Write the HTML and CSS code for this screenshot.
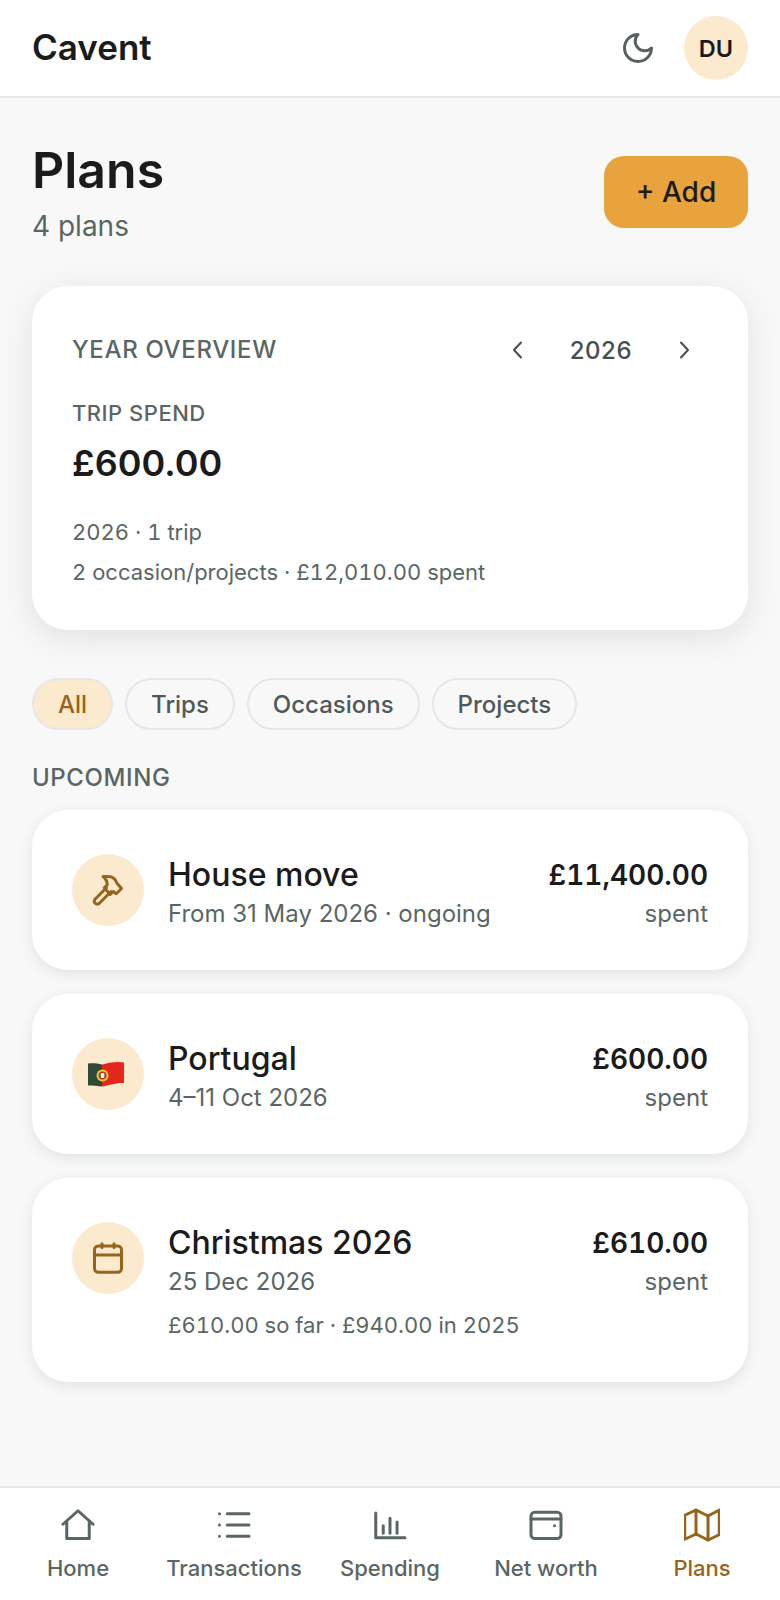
FILE: index.html
```html
<!DOCTYPE html>
<html lang="en">
<head>
  <meta charset="utf-8">
  <title>Cavent - Plans</title>
  <link rel="stylesheet" href="styles.css">
</head>
<body>
  <div class="app">
    <header class="topbar">
      <span class="brand">Cavent</span>
      <div class="topbar-right">
        <svg class="moon" viewBox="0 0 24 24"><path d="M12 3a6 6 0 0 0 9 9 9 9 0 1 1-9-9Z"/></svg>
        <div class="avatar">DU</div>
      </div>
    </header>

    <main class="content">
      <div class="page-head">
        <div>
          <h1 class="page-title">Plans</h1>
          <p class="page-count">4 plans</p>
        </div>
        <button class="add-btn">+ Add</button>
      </div>

      <section class="overview">
        <div class="overview-top">
          <span class="overview-label">YEAR OVERVIEW</span>
          <div class="year-nav">
            <svg class="chev" viewBox="0 0 24 24"><path d="M15 4.500 8 12l7 7.500"/></svg>
            <span class="year">2026</span>
            <svg class="chev" viewBox="0 0 24 24"><path d="M9 4.500l7 7.500-7 7.500"/></svg>
          </div>
        </div>
        <div class="spend-label">TRIP SPEND</div>
        <div class="spend-value">£600.00</div>
        <p class="overview-note first">2026 · 1 trip</p>
        <p class="overview-note">2 occasion/projects · £12,010.00 spent</p>
      </section>

      <div class="chips">
        <span class="chip active">All</span>
        <span class="chip">Trips</span>
        <span class="chip">Occasions</span>
        <span class="chip">Projects</span>
      </div>

      <h2 class="section-label">UPCOMING</h2>

      <div class="plan">
        <div class="plan-icon">
          <svg class="icon-brown" viewBox="0 0 24 24"><path d="M11 10.500 3.300 18.200a2 2 0 0 0 2.800 2.800L14 13"/><path d="M8.700 3H12c3 0 5 1.500 6 4.500l3 3.500-3.500 3.500-2-1.500-2 2-4-4.500 2-2c0-2-1-4-2.800-5.500Z"/></svg>
        </div>
        <div class="plan-main">
          <div class="plan-name">House move</div>
          <div class="plan-date">From 31 May 2026 · ongoing</div>
        </div>
        <div class="plan-side">
          <div class="plan-amount">£11,400.00</div>
          <div class="plan-spent">spent</div>
        </div>
      </div>

      <div class="plan">
        <div class="plan-icon">
          <svg class="flag" viewBox="0 0 36 26">
            <path fill="#2e4a36" d="M0 2.500C5 2 10 2.500 14 3.500v22c-4-.5-9-1-14-1Z"/>
            <path fill="#e4261c" d="M14 3.500C20 2 28 0 36 1.500V22c-8-.5-16 2.500-22 3.500Z"/>
            <circle cx="14.500" cy="14.500" r="6" fill="#e9cf2b"/>
            <circle cx="14.500" cy="14.500" r="4" fill="#b33a2b"/>
            <rect x="12.700" y="12" width="3.600" height="5" rx="1" fill="#eef0f2"/>
          </svg>
        </div>
        <div class="plan-main">
          <div class="plan-name">Portugal</div>
          <div class="plan-date">4–11 Oct 2026</div>
        </div>
        <div class="plan-side">
          <div class="plan-amount">£600.00</div>
          <div class="plan-spent">spent</div>
        </div>
      </div>

      <div class="plan tall">
        <div class="plan-icon">
          <svg class="icon-brown" viewBox="0 0 24 24"><rect x="3" y="4" width="18" height="17.500" rx="2.500"/><path d="M3 10h18M8 2.500V5M16 2.500V5"/></svg>
        </div>
        <div class="plan-main">
          <div class="plan-name">Christmas 2026</div>
          <div class="plan-date">25 Dec 2026</div>
          <div class="plan-extra">£610.00 so far · £940.00 in 2025</div>
        </div>
        <div class="plan-side">
          <div class="plan-amount">£610.00</div>
          <div class="plan-spent">spent</div>
        </div>
      </div>
    </main>

    <nav class="tabbar">
      <div class="tab">
        <svg viewBox="0 0 24 24"><path d="M2 11.500 12 2.500l10 9"/><path d="M4.500 9.500V21h15V9.500"/></svg>
        <span>Home</span>
      </div>
      <div class="tab">
        <svg viewBox="0 0 24 24"><path d="M7.500 4.500H22M7.500 12H22M7.500 19.500H22M2.300 4.500h.01M2.300 12h.01M2.300 19.500h.01"/></svg>
        <span>Transactions</span>
      </div>
      <div class="tab">
        <svg viewBox="0 0 24 24"><path d="M2.500 4v16.500H22M7.500 17.500v-5M12 17.500v-10M16.700 17.500v-7.500"/></svg>
        <span>Spending</span>
      </div>
      <div class="tab">
        <svg viewBox="0 0 24 24"><rect x="2" y="3.500" width="20" height="17.500" rx="2.500"/><path d="M2 8h20M17.700 12.500h.01"/></svg>
        <span>Net worth</span>
      </div>
      <div class="tab current">
        <svg viewBox="0 0 24 24"><path d="M.5 5.500 8 2l8 4 7.500-4v16.500L16 22l-8-4-7.500 3.500Z"/><path d="M8 2v16M16 6v16"/></svg>
        <span>Plans</span>
      </div>
    </nav>
  </div>
</body>
</html>
```

FILE: styles.css
```css
* {
  box-sizing: border-box;
}

body {
  margin: 0;
  background: #f8f8f8;
  color: #1b1b1b;
  font-family: "Inter", "Liberation Sans", sans-serif;
}

p, h1, h2 {
  margin: 0;
}

svg {
  fill: none;
  stroke: currentColor;
  stroke-linecap: round;
  stroke-linejoin: round;
  stroke-width: 2;
}

.app {
  display: flex;
  flex-direction: column;
  min-height: 1600px;
}

/* top bar */
.topbar {
  display: flex;
  align-items: center;
  justify-content: space-between;
  height: 98px;
  padding: 0 32px;
  background: #fff;
  border-bottom: 2px solid #e4e8e8;
}

.brand {
  margin-top: -2px;
  font-size: 35px;
  font-weight: 600;
}

.topbar-right {
  display: flex;
  align-items: center;
  gap: 28px;
}

.moon {
  width: 36px;
  height: 36px;
  color: #566260;
}

.avatar {
  display: flex;
  align-items: center;
  justify-content: center;
  width: 64px;
  height: 64px;
  border-radius: 50%;
  background: #fceacf;
  font-size: 23.500px;
  font-weight: 600;
}

/* page */
.content {
  flex: 1;
  padding: 44px 32px 0;
}

.page-head {
  display: flex;
  align-items: flex-start;
  justify-content: space-between;
  margin-bottom: 42px;
}

.page-title {
  font-size: 50px;
  font-weight: 600;
  line-height: 56px;
}

.page-count {
  margin-top: 10px;
  font-size: 28px;
  line-height: 36px;
  color: #5a6664;
}

.add-btn {
  width: 144px;
  height: 72px;
  margin-top: 14px;
  border: none;
  border-radius: 20px;
  background: #e8a33d;
  color: #1b1b1b;
  font-family: inherit;
  font-size: 28px;
  font-weight: 500;
}

/* overview card */
.overview {
  height: 344px;
  padding: 48px 40px 0;
  border-radius: 36px;
  background: #fff;
  box-shadow: 0 8px 32px rgba(60, 80, 80, 0.13);
}

.overview-top {
  display: flex;
  align-items: center;
  justify-content: space-between;
}

.overview-label {
  font-size: 24px;
  line-height: 32px;
  font-weight: 500;
  letter-spacing: 0.65px;
  color: #5a6664;
}

.year-nav {
  display: flex;
  align-items: center;
  gap: 40px;
  margin-right: 12px;
  color: #454f4e;
}

.year {
  font-size: 24px;
  font-weight: 500;
  letter-spacing: 0.5px;
}

.chev {
  width: 24px;
  height: 24px;
}

.spend-label {
  margin-top: 33px;
  font-size: 22px;
  line-height: 28px;
  font-weight: 500;
  letter-spacing: 0.5px;
  color: #5a6664;
}

.spend-value {
  margin-top: 12px;
  font-size: 36px;
  line-height: 48px;
  font-weight: 600;
}

.overview-note {
  font-size: 22px;
  line-height: 40px;
  color: #5a6664;
  font-variant-numeric: tabular-nums;
}

.overview-note.first {
  margin-top: 25px;
}

/* filters */
.chips {
  display: flex;
  gap: 12px;
  margin-top: 48px;
}

.chip {
  display: flex;
  align-items: center;
  height: 52px;
  padding: 0 24px;
  border: 2px solid #e4e8e8;
  border-radius: 26px;
  font-size: 24px;
  font-weight: 500;
  color: #4f5a58;
}

.chip.active {
  background: #fceacf;
  color: #96641c;
}

.section-label {
  margin-top: 33px;
  margin-bottom: 17px;
  font-size: 24px;
  line-height: 30px;
  font-weight: 500;
  letter-spacing: 0.6px;
  color: #5a6664;
}

/* plan rows */
.plan {
  display: flex;
  align-items: flex-start;
  height: 160px;
  margin-bottom: 24px;
  padding: 43px 40px 0;
  border-radius: 36px;
  background: #fff;
  box-shadow: 0 4px 14px rgba(60, 80, 80, 0.12);
}

.plan.tall {
  height: 204px;
}

.plan-icon {
  display: flex;
  flex: none;
  align-items: center;
  justify-content: center;
  width: 72px;
  height: 72px;
  margin-top: 1px;
  margin-right: 24px;
  border-radius: 50%;
  background: #fceacf;
}

.icon-brown {
  width: 36px;
  height: 36px;
  color: #96641c;
}

.flag {
  width: 36px;
  height: 26px;
  margin-right: 4px;
  stroke: none;
}

.plan-main {
  flex: 1;
}

.plan-name {
  font-size: 32px;
  line-height: 44px;
  font-weight: 500;
}

.plan-date {
  font-size: 24px;
  line-height: 34px;
  color: #5a6664;
}

.plan-extra {
  margin-top: 10px;
  font-size: 22px;
  line-height: 32px;
  color: #5a6664;
  font-variant-numeric: tabular-nums;
}

.plan-side {
  text-align: right;
}

.plan-amount {
  font-size: 28px;
  line-height: 44px;
  font-weight: 600;
  font-variant-numeric: tabular-nums;
}

.plan-spent {
  font-size: 24px;
  line-height: 34px;
  color: #5a6664;
}

/* bottom nav */
.tabbar {
  display: grid;
  grid-template-columns: repeat(5, 1fr);
  height: 114px;
  padding-top: 19px;
  background: #fff;
  border-top: 2px solid #e4e8e8;
}

.tab {
  display: flex;
  flex-direction: column;
  align-items: center;
  color: #5a6664;
  font-size: 22px;
  font-weight: 500;
}

.tab svg {
  width: 36px;
  height: 36px;
  margin-bottom: 12px;
}

.tab.current {
  color: #96641c;
}
```
